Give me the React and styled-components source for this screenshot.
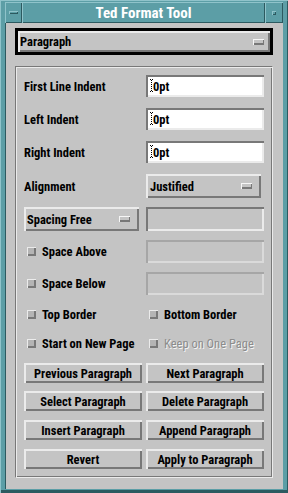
import React from 'react';
import styled, {createGlobalStyle} from 'styled-components';

const colors = {
    gray: '#c4c4c4',
    light: '#ebebeb',
    dark: '#787878',
    dim: '#a6a6a6',
    teal: '#5c9ea6',
    tealLight: '#8fc3ca',
    tealDark: '#2c5a60',
    text: '#000000',
};

const GlobalStyle = createGlobalStyle`
  html, body {
    margin: 0;
    padding: 0;
    background: ${colors.teal};
  }

  body {
    font-family: "Roboto Condensed", "Liberation Sans", Arial, sans-serif;
  }
`

export default function App() {
    return (
        <>
            <GlobalStyle/>
            <Frame>
                <TitleBar>
                    <TitleButton $w={17}><MenuBar/></TitleButton>
                    <Title>Ted Format Tool</Title>
                    <TitleButton $w={18}><MaxBox/></TitleButton>
                </TitleBar>
                <Body>
                    <FocusRing>
                        <DropButton $pl={2} $pr={6}>
                            Paragraph
                            <Indicator/>
                        </DropButton>
                    </FocusRing>
                    <Panel>
                        <Row $h={22}>
                            <Label>First Line Indent</Label>
                            <Field><Caret/>0pt</Field>
                        </Row>
                        <Row $h={22} $mt={11}>
                            <Label>Left Indent</Label>
                            <Field><Caret/>0pt</Field>
                        </Row>
                        <Row $h={22} $mt={11}>
                            <Label>Right Indent</Label>
                            <Field><Caret/>0pt</Field>
                        </Row>
                        <Row $h={24} $mt={11}>
                            <Label>Alignment</Label>
                            <DropButton $w={115} $pl={4} $pr={9}>
                                Justified
                                <Indicator/>
                            </DropButton>
                        </Row>
                        <Row $h={24} $mt={9}>
                            <DropButton $w={115} $pl={3} $pr={9}>
                                Spacing Free
                                <Indicator/>
                            </DropButton>
                            <Field $empty/>
                        </Row>
                        <Row $h={23} $mt={9}>
                            <Check label="Space Above"/>
                            <Field $disabled/>
                        </Row>
                        <Row $h={23} $mt={9}>
                            <Check label="Space Below"/>
                            <Field $disabled/>
                        </Row>
                        <Row $h={20} $mt={9}>
                            <Check label="Top Border"/>
                            <Check label="Bottom Border"/>
                        </Row>
                        <Row $h={19} $mt={10}>
                            <Check label="Start on New Page"/>
                            <Check label="Keep on One Page" disabled/>
                        </Row>
                        <Row $h={20} $mt={10}>
                            <Button>Previous Paragraph</Button>
                            <Button>Next Paragraph</Button>
                        </Row>
                        <Row $h={20} $mt={8}>
                            <Button>Select Paragraph</Button>
                            <Button>Delete Paragraph</Button>
                        </Row>
                        <Row $h={20} $mt={9}>
                            <Button>Insert Paragraph</Button>
                            <Button>Append Paragraph</Button>
                        </Row>
                        <Row $h={20} $mt={9}>
                            <Button>Revert</Button>
                            <Button>Apply to Paragraph</Button>
                        </Row>
                    </Panel>
                </Body>
            </Frame>
        </>
    );
}

const Check = ({label, disabled}) => (
    <CheckRow>
        <CheckBox/>
        <CheckLabel $disabled={disabled}>{label}</CheckLabel>
    </CheckRow>
)

// dotted I-beam text cursor
const Caret = () => (
    <CaretSvg width="3" height="13" viewBox="0 0 3 13">
        <rect x="0" y="0" width="1" height="1" fill="#000"/>
        <rect x="2" y="0" width="1" height="1" fill="#000"/>
        <rect x="1" y="1" width="1" height="1" fill="#000"/>
        <rect x="1" y="3" width="1" height="1" fill="#000"/>
        <rect x="1" y="5" width="1" height="1" fill="#000"/>
        <rect x="1" y="7" width="1" height="1" fill="#000"/>
        <rect x="1" y="9" width="1" height="1" fill="#000"/>
        <rect x="1" y="11" width="1" height="1" fill="#000"/>
        <rect x="0" y="12" width="1" height="1" fill="#000"/>
        <rect x="2" y="12" width="1" height="1" fill="#000"/>
    </CaretSvg>
)

const Frame = styled.div`
  width: 288px;
  height: 493px;
  box-sizing: border-box;
  padding: 2px 5px 4px 5px;
  display: flex;
  flex-direction: column;
  background: ${colors.teal};
  box-shadow: inset 1px 1px 0 ${colors.tealLight}, inset 0 -3px 0 ${colors.tealDark}, inset -1px 0 0 ${colors.tealDark};
`

const TitleBar = styled.div`
  height: 21px;
  display: flex;
  flex-shrink: 0;
`

const TitleButton = styled.div`
  width: ${p => p.$w}px;
  display: flex;
  align-items: center;
  justify-content: center;
  box-shadow: inset 1px 1px 0 ${colors.tealLight}, inset -1px -1px 0 ${colors.tealDark};
`

const MenuBar = styled.div`
  width: 9px;
  height: 3px;
  background: ${colors.teal};
  box-shadow: inset 1px 1px 0 ${colors.tealLight}, inset -1px -1px 0 ${colors.tealDark};
`

const MaxBox = styled.div`
  width: 4px;
  height: 4px;
  background: ${colors.teal};
  box-shadow: inset 1px 1px 0 ${colors.tealLight}, inset -1px -1px 0 ${colors.tealDark};
`

const Title = styled.div`
  flex: 1;
  display: flex;
  align-items: center;
  justify-content: center;
  color: #ffffff;
  font-weight: 700;
  font-size: 15px;
  box-shadow: inset 1px 1px 0 ${colors.tealLight}, inset -1px -1px 0 ${colors.tealDark};
`

const Body = styled.div`
  flex: 1;
  display: flex;
  flex-direction: column;
  gap: 11px;
  padding: 5px 10px 11px 10px;
  background: ${colors.gray};
  box-shadow: inset 1px 0 0 ${colors.tealDark};
`

const FocusRing = styled.div`
  height: 27px;
  box-sizing: border-box;
  border: 3px solid #000;
  display: flex;
`

const DropButton = styled.div`
  flex: 1;
  width: ${p => p.$w ? `${p.$w}px` : 'auto'};
  height: 100%;
  box-sizing: border-box;
  display: flex;
  align-items: center;
  justify-content: space-between;
  padding: 0 ${p => p.$pr}px 0 ${p => p.$pl}px;
  background: ${colors.gray};
  box-shadow: inset 2px 2px 0 ${colors.light}, inset -2px -2px 0 ${colors.dark};
  font-size: 12.5px;
  font-weight: 700;
  color: ${colors.text};
`

const Indicator = styled.span`
  width: 11px;
  height: 6px;
  background: ${colors.gray};
  box-shadow: inset 1px 1px 0 #f6f6f6, inset -1px -2px 0 ${colors.dark};
`

const Panel = styled.div`
  flex: 1;
  display: flex;
  flex-direction: column;
  padding: 8px 8px 7px 8px;
  border: 1px solid;
  border-color: ${colors.dark} ${colors.light} ${colors.light} ${colors.dark};
  box-shadow: inset 1px 1px 0 ${colors.light}, inset -1px -1px 0 ${colors.dark};
`

const Row = styled.div`
  display: grid;
  grid-template-columns: 118px 118px;
  column-gap: 4px;
  align-items: center;
  height: ${p => p.$h}px;
  margin-top: ${p => p.$mt || 0}px;
  flex-shrink: 0;

  & > * {
    height: 100%;
  }
`

const Label = styled.div`
  display: flex;
  align-items: center;
  font-size: 12.5px;
  font-weight: 700;
  color: ${colors.text};
`

const Field = styled.div`
  display: flex;
  align-items: center;
  box-sizing: border-box;
  padding-left: 4px;
  font-size: 12.5px;
  font-weight: 700;
  color: ${colors.text};
  background: ${p => (p.$empty || p.$disabled) ? colors.gray : '#ffffff'};
  box-shadow: ${p => p.$disabled
          ? `inset 2px 2px 0 ${colors.dim}, inset -2px -2px 0 #dadada`
          : `inset 2px 2px 0 ${colors.dark}, inset -2px -2px 0 ${colors.light}`};
`

const CaretSvg = styled.svg`
  display: block;
  margin-top: -1px;
`

const CheckRow = styled.div`
  display: flex;
  align-items: center;
  gap: 6px;
  padding-left: 3px;
`

const CheckBox = styled.span`
  width: 9px;
  height: 9px;
  flex-shrink: 0;
  background: #b4b4b4;
  box-shadow: inset 1px 1px 0 ${colors.light}, inset -2px -2px 0 ${colors.dark};
`

const CheckLabel = styled.span`
  font-size: 12.5px;
  font-weight: ${p => p.$disabled ? 400 : 700};
  color: ${p => p.$disabled ? '#8c8c8c' : colors.text};
  text-shadow: ${p => p.$disabled ? '1px 1px 0 #f4f4f4' : 'none'};
  white-space: nowrap;
`

const Button = styled.div`
  display: flex;
  align-items: center;
  justify-content: center;
  box-sizing: border-box;
  background: ${colors.gray};
  box-shadow: inset 2px 2px 0 ${colors.light}, inset -2px -2px 0 ${colors.dark};
  font-size: 12.5px;
  font-weight: 700;
  color: ${colors.text};
  white-space: nowrap;
`
